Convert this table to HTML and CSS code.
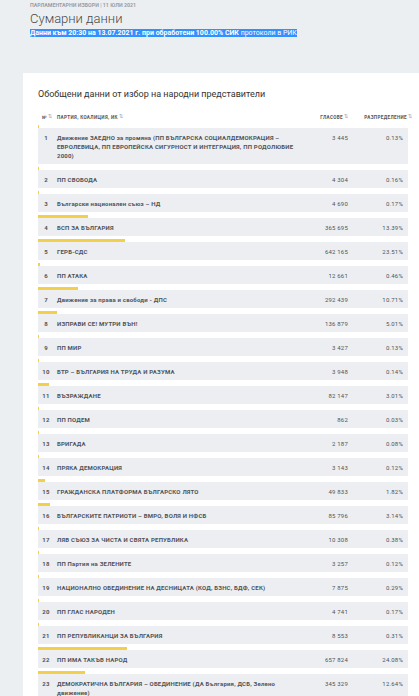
FILE: index.html
```html
<!DOCTYPE html>
<html lang="bg">
<head>
  <meta charset="UTF-8" />
  <meta name="viewport" content="width=device-width, initial-scale=1.0"/>
  <title>Сумарни данни - Парламентарни избори 11 юли 2021</title>
  <link rel="stylesheet" href="styles.css">
</head>
<body>

  <header class="top">
    <p class="nadzaglavie">Парламентарни избори | 11 юли 2021</p>
    <h1>Сумарни данни</h1>
    <p class="obrabotka"><span><b>Данни към 20:30 на 13.07.2021 г. при обработени 100.00% СИК</b> протоколи в РИК</span></p>
  </header>

  <section class="karta">
    <h2>Обобщени данни от избор на народни представители</h2>

    <div class="tablica">
      <div class="zaglavie">
        <span class="nomer">№<i>⇅</i></span>
        <span class="ime">Партия, коалиция, ИК<i>⇅</i></span>
        <span class="glasove">Гласове<i>⇅</i></span>
        <span class="procent">Разпределение<i>⇅</i></span>
      </div>

      <div class="red">
        <div class="leta" style="width:0.13%"></div>
        <div class="danni">
          <span class="nomer">1</span>
          <span class="ime">Движение ЗАЕДНО за промяна (ПП БЪЛГАРСКА СОЦИАЛДЕМОКРАЦИЯ – ЕВРОЛЕВИЦА, ПП ЕВРОПЕЙСКА СИГУРНОСТ И ИНТЕГРАЦИЯ, ПП РОДОЛЮБИЕ 2000)</span>
          <span class="glasove">3 445</span>
          <span class="procent">0.13%</span>
        </div>
      </div>
      <div class="red">
        <div class="leta" style="width:0.16%"></div>
        <div class="danni"><span class="nomer">2</span><span class="ime">ПП СВОБОДА</span><span class="glasove">4 304</span><span class="procent">0.16%</span></div>
      </div>
      <div class="red">
        <div class="leta" style="width:0.17%"></div>
        <div class="danni"><span class="nomer">3</span><span class="ime">Български национален съюз – НД</span><span class="glasove">4 690</span><span class="procent">0.17%</span></div>
      </div>
      <div class="red">
        <div class="leta" style="width:13.39%"></div>
        <div class="danni"><span class="nomer">4</span><span class="ime">БСП ЗА БЪЛГАРИЯ</span><span class="glasove">365 695</span><span class="procent">13.39%</span></div>
      </div>
      <div class="red">
        <div class="leta" style="width:23.51%"></div>
        <div class="danni"><span class="nomer">5</span><span class="ime">ГЕРБ-СДС</span><span class="glasove">642 165</span><span class="procent">23.51%</span></div>
      </div>
      <div class="red">
        <div class="leta" style="width:0.46%"></div>
        <div class="danni"><span class="nomer">6</span><span class="ime">ПП АТАКА</span><span class="glasove">12 661</span><span class="procent">0.46%</span></div>
      </div>
      <div class="red">
        <div class="leta" style="width:10.71%"></div>
        <div class="danni"><span class="nomer">7</span><span class="ime">Движение за права и свободи - ДПС</span><span class="glasove">292 439</span><span class="procent">10.71%</span></div>
      </div>
      <div class="red">
        <div class="leta" style="width:5.01%"></div>
        <div class="danni"><span class="nomer">8</span><span class="ime">ИЗПРАВИ СЕ! МУТРИ ВЪН!</span><span class="glasove">136 879</span><span class="procent">5.01%</span></div>
      </div>
      <div class="red">
        <div class="leta" style="width:0.13%"></div>
        <div class="danni"><span class="nomer">9</span><span class="ime">ПП МИР</span><span class="glasove">3 427</span><span class="procent">0.13%</span></div>
      </div>
      <div class="red">
        <div class="leta" style="width:0.14%"></div>
        <div class="danni"><span class="nomer">10</span><span class="ime">БТР – БЪЛГАРИЯ НА ТРУДА И РАЗУМА</span><span class="glasove">3 948</span><span class="procent">0.14%</span></div>
      </div>
      <div class="red">
        <div class="leta" style="width:3.01%"></div>
        <div class="danni"><span class="nomer">11</span><span class="ime">ВЪЗРАЖДАНЕ</span><span class="glasove">82 147</span><span class="procent">3.01%</span></div>
      </div>
      <div class="red">
        <div class="leta" style="width:0.03%"></div>
        <div class="danni"><span class="nomer">12</span><span class="ime">ПП ПОДЕМ</span><span class="glasove">862</span><span class="procent">0.03%</span></div>
      </div>
      <div class="red">
        <div class="leta" style="width:0.08%"></div>
        <div class="danni"><span class="nomer">13</span><span class="ime">БРИГАДА</span><span class="glasove">2 187</span><span class="procent">0.08%</span></div>
      </div>
      <div class="red">
        <div class="leta" style="width:0.12%"></div>
        <div class="danni"><span class="nomer">14</span><span class="ime">ПРЯКА ДЕМОКРАЦИЯ</span><span class="glasove">3 143</span><span class="procent">0.12%</span></div>
      </div>
      <div class="red">
        <div class="leta" style="width:1.82%"></div>
        <div class="danni"><span class="nomer">15</span><span class="ime">ГРАЖДАНСКА ПЛАТФОРМА БЪЛГАРСКО ЛЯТО</span><span class="glasove">49 833</span><span class="procent">1.82%</span></div>
      </div>
      <div class="red">
        <div class="leta" style="width:3.14%"></div>
        <div class="danni"><span class="nomer">16</span><span class="ime">БЪЛГАРСКИТЕ ПАТРИОТИ – ВМРО, ВОЛЯ И НФСБ</span><span class="glasove">85 796</span><span class="procent">3.14%</span></div>
      </div>
      <div class="red">
        <div class="leta" style="width:0.38%"></div>
        <div class="danni"><span class="nomer">17</span><span class="ime">ЛЯВ СЪЮЗ ЗА ЧИСТА И СВЯТА РЕПУБЛИКА</span><span class="glasove">10 308</span><span class="procent">0.38%</span></div>
      </div>
      <div class="red">
        <div class="leta" style="width:0.12%"></div>
        <div class="danni"><span class="nomer">18</span><span class="ime">ПП Партия на ЗЕЛЕНИТЕ</span><span class="glasove">3 257</span><span class="procent">0.12%</span></div>
      </div>
      <div class="red">
        <div class="leta" style="width:0.29%"></div>
        <div class="danni"><span class="nomer">19</span><span class="ime">НАЦИОНАЛНО ОБЕДИНЕНИЕ НА ДЕСНИЦАТА (КОД, БЗНС, БДФ, СЕК)</span><span class="glasove">7 875</span><span class="procent">0.29%</span></div>
      </div>
      <div class="red">
        <div class="leta" style="width:0.17%"></div>
        <div class="danni"><span class="nomer">20</span><span class="ime">ПП ГЛАС НАРОДЕН</span><span class="glasove">4 741</span><span class="procent">0.17%</span></div>
      </div>
      <div class="red">
        <div class="leta" style="width:0.31%"></div>
        <div class="danni"><span class="nomer">21</span><span class="ime">ПП РЕПУБЛИКАНЦИ ЗА БЪЛГАРИЯ</span><span class="glasove">8 553</span><span class="procent">0.31%</span></div>
      </div>
      <div class="red">
        <div class="leta" style="width:24.08%"></div>
        <div class="danni"><span class="nomer">22</span><span class="ime">ПП ИМА ТАКЪВ НАРОД</span><span class="glasove">657 824</span><span class="procent">24.08%</span></div>
      </div>
      <div class="red">
        <div class="leta" style="width:12.64%"></div>
        <div class="danni"><span class="nomer">23</span><span class="ime">ДЕМОКРАТИЧНА БЪЛГАРИЯ – ОБЕДИНЕНИЕ (ДА България, ДСБ, Зелено движение)</span><span class="glasove">345 329</span><span class="procent">12.64%</span></div>
      </div>
    </div>
  </section>

</body>
</html>
```

FILE: styles.css
```css
* { box-sizing: border-box; }

body {
  font-family: Roboto, "Liberation Sans", sans-serif;
  margin: 0;
  background-color: #eceff2;
  color: #444;
}

.top {
  padding: 2px 0 0 30px;
}

.nadzaglavie {
  margin: 0;
  font-size: 5.3px;
  line-height: 7px;
  font-weight: bold;
  text-transform: uppercase;
  color: #9a9ea3;
}

.top h1 {
  margin: 1px 0 0;
  font-size: 13px;
  line-height: 17px;
  font-weight: 300;
  color: #4a4a4a;
}

.obrabotka {
  margin: 1px 0 0;
  font-size: 7px;
  line-height: 10px;
}

.obrabotka span {
  background-color: #3390ff;
  color: white;
}

/* бялата карта с таблицата */
.karta {
  margin: 35px 0 0 23px;
  background-color: white;
  padding: 14px 11px 0 15px;
}

.karta h2 {
  margin: 0;
  font-size: 9px;
  line-height: 14px;
  font-weight: normal;
  color: #333;
}

.zaglavie,
.danni {
  display: grid;
  grid-template-columns: 19px 1fr 52px 55px;
  padding-right: 5px;
}

.zaglavie {
  margin-top: 11px;
  font-size: 4.6px;
  line-height: 8px;
  letter-spacing: 0.35px;
  font-weight: bold;
  text-transform: uppercase;
  color: #555;
}

.zaglavie i {
  font-style: normal;
  font-weight: normal;
  color: #9aa4b4;
  font-size: 5px;
  vertical-align: 1px;
  margin-left: 1px;
  letter-spacing: 0;
}

.zaglavie .nomer {
  text-align: left;
  padding-left: 4px;
}

.zaglavie .procent {
  margin-right: -9px;
}

.red {
  padding-top: 3px;
}

.leta {
  height: 3px;
  background-color: #f3d04c;
}

.danni {
  background-color: #eceef1;
  padding-top: 4.5px;
  padding-bottom: 4.5px;
  font-size: 6px;
  line-height: 9px;
  letter-spacing: 0.2px;
  font-weight: bold;
  color: #50545a;
}

.nomer {
  text-align: center;
  padding-right: 3px;
}

.ime {
  padding-right: 1px;
}

.glasove,
.procent {
  text-align: right;
  font-weight: normal;
}

.zaglavie .glasove,
.zaglavie .procent {
  font-weight: bold;
}
```
